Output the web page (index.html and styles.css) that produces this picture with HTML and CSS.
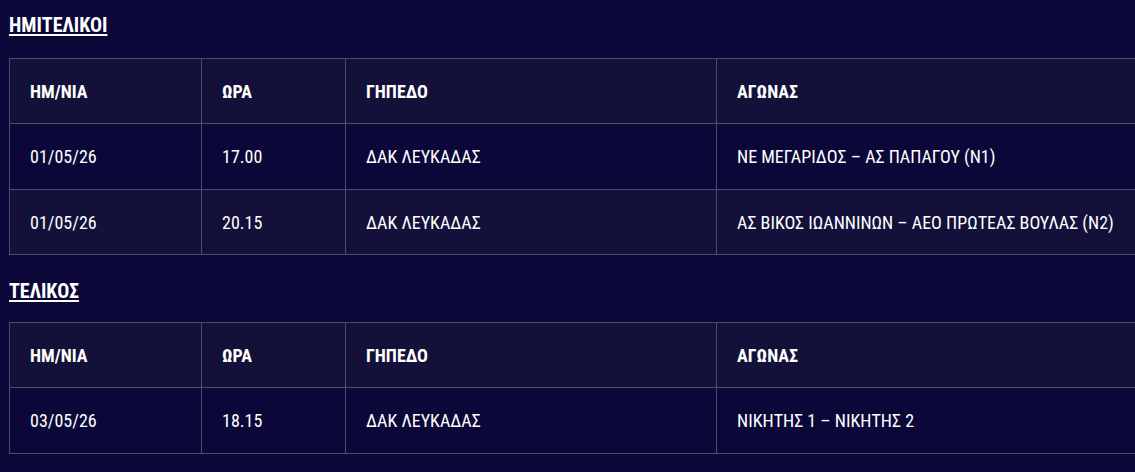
FILE: index.html
```html
<!DOCTYPE html>
<html lang="el">
<head>
<meta charset="utf-8">
<link rel="stylesheet" href="styles.css">
</head>
<body>
<div class="page">
  <h3 class="title first"><u>ΗΜΙΤΕΛΙΚΟΙ</u></h3>
  <table class="games">
    <colgroup><col class="c1"><col class="c2"><col class="c3"><col class="c4"></colgroup>
    <thead>
      <tr><th>ΗΜ/ΝΙΑ</th><th>ΩΡΑ</th><th>ΓΗΠΕΔΟ</th><th>ΑΓΩΝΑΣ</th></tr>
    </thead>
    <tbody>
      <tr><td>01/05/26</td><td>17.00</td><td>ΔΑΚ ΛΕΥΚΑΔΑΣ</td><td>ΝΕ ΜΕΓΑΡΙΔΟΣ – ΑΣ ΠΑΠΑΓΟΥ (Ν1)</td></tr>
      <tr><td>01/05/26</td><td>20.15</td><td>ΔΑΚ ΛΕΥΚΑΔΑΣ</td><td>ΑΣ ΒΙΚΟΣ ΙΩΑΝΝΙΝΩΝ – ΑΕΟ ΠΡΩΤΕΑΣ ΒΟΥΛΑΣ (Ν2)</td></tr>
    </tbody>
  </table>
  <h3 class="title second"><u>ΤΕΛΙΚΟΣ</u></h3>
  <table class="games">
    <colgroup><col class="c1"><col class="c2"><col class="c3"><col class="c4"></colgroup>
    <thead>
      <tr><th>ΗΜ/ΝΙΑ</th><th>ΩΡΑ</th><th>ΓΗΠΕΔΟ</th><th>ΑΓΩΝΑΣ</th></tr>
    </thead>
    <tbody>
      <tr><td>03/05/26</td><td>18.15</td><td>ΔΑΚ ΛΕΥΚΑΔΑΣ</td><td>ΝΙΚΗΤΗΣ 1 – ΝΙΚΗΤΗΣ 2</td></tr>
    </tbody>
  </table>
</div>
</body>
</html>
```

FILE: styles.css
```css
html, body {
  margin: 0;
  padding: 0;
  background: #0b0738;
  overflow: hidden;
}
.page {
  width: 1136px;
  padding: 0 0 0 9px;
  font-family: "Roboto Condensed", Roboto, "Noto Sans", sans-serif;
  font-stretch: condensed;
  color: #ffffff;
}
.title {
  margin: 0;
  box-sizing: border-box;
  font-size: 20px;
  font-weight: 700;
  line-height: 24px;
}
.title.first {
  padding-top: 13px;
  height: 58px;
}
.title.second {
  padding-top: 24px;
  height: 67px;
}
.title u {
  text-decoration-thickness: 2px;
  text-underline-offset: 2px;
}
.games {
  border-collapse: collapse;
  table-layout: fixed;
  width: 1140px;
}
.c1 { width: 192px; }
.c2 { width: 144px; }
.c3 { width: 371px; }
.games th, .games td {
  border: 1px solid #4f4c72;
  padding: 0 20px;
  height: 64px;
  text-align: left;
  font-size: 18px;
  vertical-align: middle;
}
.games tbody tr:first-child td {
  height: 65px;
}
.games th {
  font-weight: 700;
}
.games td {
  font-weight: 400;
}
.games thead tr,
.games tbody tr:nth-child(even) {
  background: #131139;
}
.games tbody tr:nth-child(odd) {
  background: #0b0738;
}
```
